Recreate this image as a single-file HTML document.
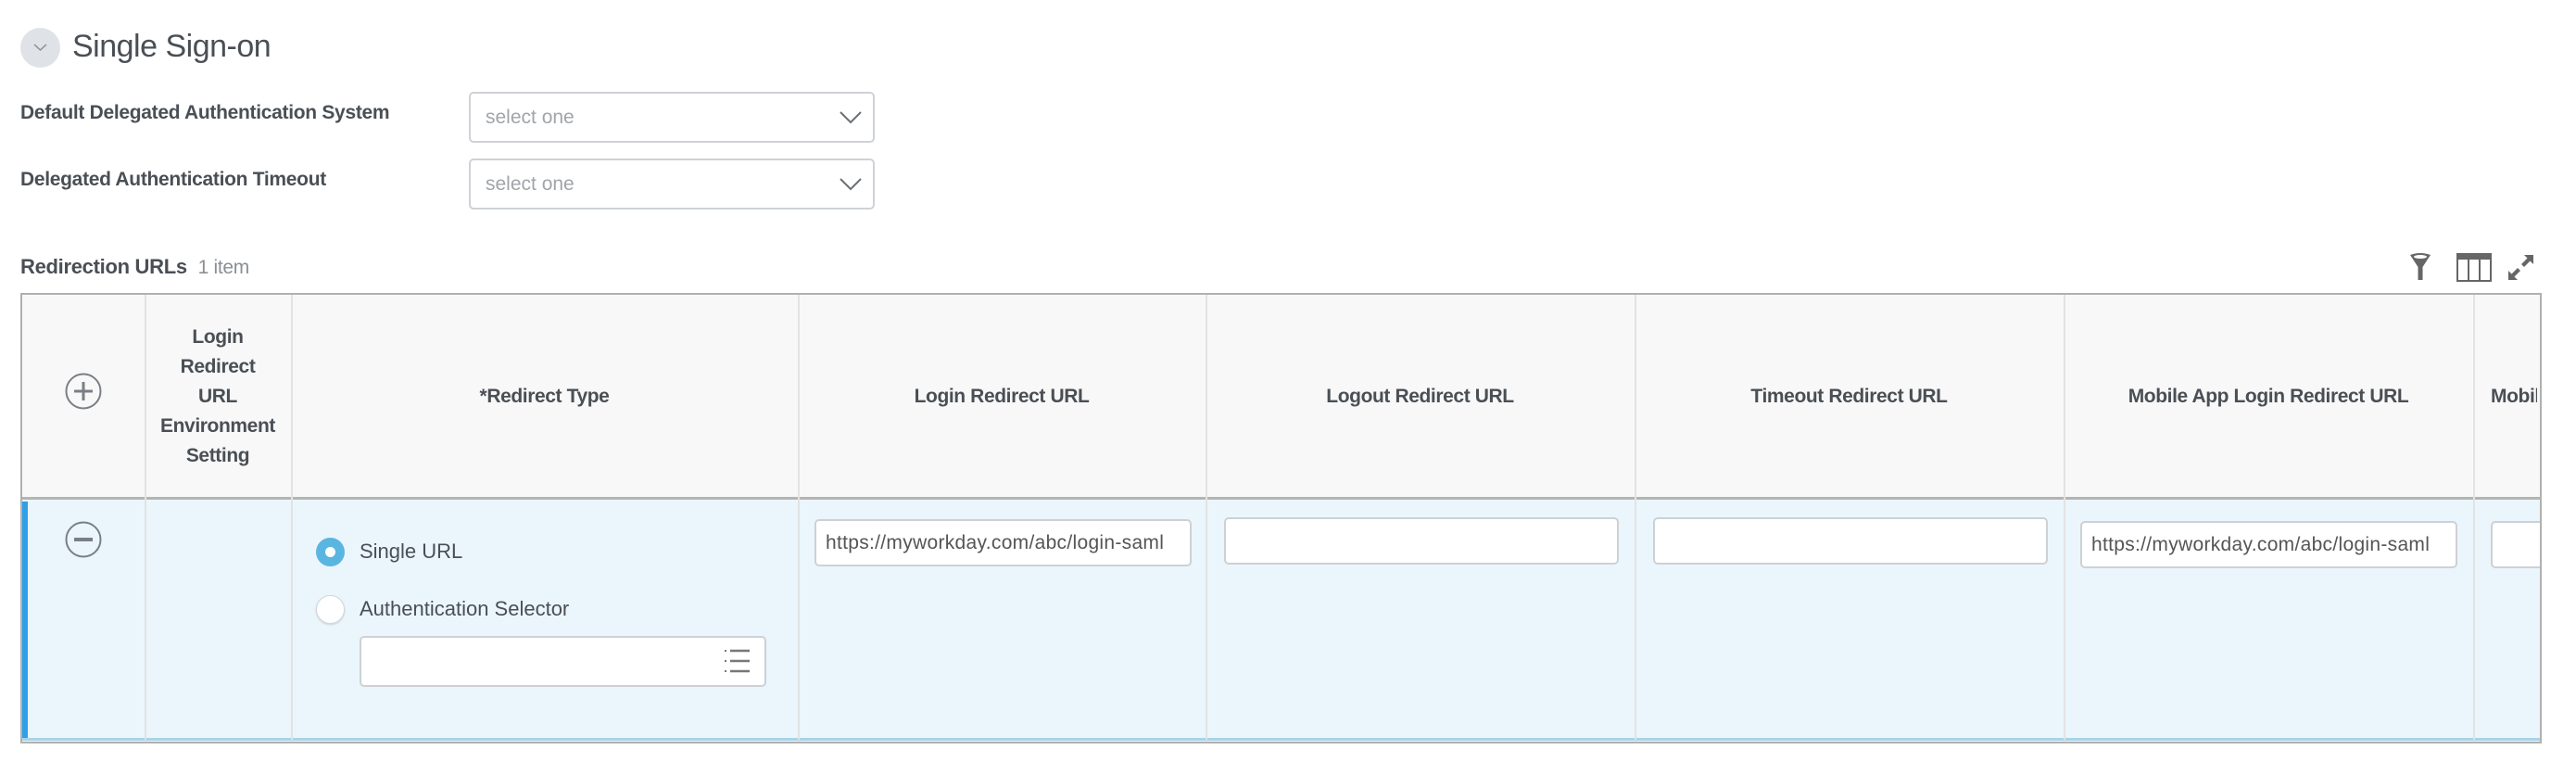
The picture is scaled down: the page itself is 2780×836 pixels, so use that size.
<!DOCTYPE html>
<html><head><meta charset="utf-8"><style>
*{box-sizing:border-box;margin:0;padding:0}
body{width:2780px;height:832px;background:#fff;position:relative;overflow:hidden;font-family:"Liberation Sans",Arial,sans-serif;color:#333}
.a{position:absolute}
.lbl{font-size:21px;font-weight:bold;color:#4a4f55;letter-spacing:-0.3px}
.sel{border:2px solid #ced2d7;border-radius:5px;background:#fff;width:438px;height:55px}
.sel span{position:absolute;left:16px;top:14px;font-size:21px;color:#a0a5aa}
.hd{font-size:21px;color:#4a4f55;text-align:center;font-weight:bold;letter-spacing:-0.4px}
.vl{position:absolute;width:2px;background:#e3e3e3}
.inp{position:absolute;height:51px;border:2px solid #cdd1d6;border-radius:5px;background:#fff;overflow:hidden;white-space:nowrap;font-size:21px;color:#555;padding:12px 0 0 10px}
</style></head><body>
<div class="a" style="left:22px;top:30px;width:43px;height:43px;border-radius:50%;background:#dfe3e7"></div>
<svg class="a" style="left:35px;top:45px" width="17" height="12" viewBox="0 0 17 12"><path d="M2 3 L8.5 9 L15 3" fill="none" stroke="#8a9096" stroke-width="1.5"/></svg>
<div class="a" style="left:78px;top:31px;font-size:34px;color:#4a4f55;letter-spacing:-0.5px">Single Sign-on</div>

<div class="a lbl" style="left:22px;top:110px">Default Delegated Authentication System</div>
<div class="a lbl" style="left:22px;top:182px">Delegated Authentication Timeout</div>
<div class="a sel" style="left:506px;top:99px"><span>select one</span>
<svg class="a" style="left:398px;top:18px" width="24" height="16" viewBox="0 0 24 16"><path d="M1 2 L12 13 L23 2" fill="none" stroke="#6a6f75" stroke-width="2"/></svg></div>
<div class="a sel" style="left:506px;top:171px"><span>select one</span>
<svg class="a" style="left:398px;top:18px" width="24" height="16" viewBox="0 0 24 16"><path d="M1 2 L12 13 L23 2" fill="none" stroke="#6a6f75" stroke-width="2"/></svg></div>

<div class="a" style="left:22px;top:275px;font-size:22px;font-weight:bold;color:#4a4f55;letter-spacing:-0.3px">Redirection URLs <span style="font-weight:normal;color:#8a8f95;font-size:21px;margin-left:6px">1 item</span></div>

<svg class="a" style="left:2600px;top:272px" width="24" height="32" viewBox="0 0 24 32"><path d="M1 3 Q12 -1 23 3 L14.5 16 L14.5 30 L9.5 30 L9.5 16 Z" fill="#666"/><ellipse cx="12" cy="5" rx="7" ry="2" fill="#fff"/></svg>
<svg class="a" style="left:2651px;top:273px" width="38" height="31" viewBox="0 0 38 31"><rect x="1" y="1" width="36" height="29" fill="none" stroke="#666" stroke-width="2"/><rect x="1" y="1" width="36" height="6" fill="#666"/><path d="M13 7V30M25 7V30" stroke="#666" stroke-width="2"/></svg>
<svg class="a" style="left:2705px;top:273px" width="31" height="31" viewBox="0 0 31 31"><path d="M19 2H29V12L25.5 8.5 19 15 16 12 22.5 5.5Z" fill="#666"/><path d="M12 29H2V19L5.5 22.5 12 16 15 19 8.5 25.5Z" fill="#666"/></svg>

<div class="a" style="left:22px;top:316px;width:2721px;height:486px;border:2px solid #b0b0b0;background:#f8f8f8"></div>
<div class="a" style="left:24px;top:539px;width:2717px;height:261px;background:#eaf6fc"></div>
<div class="a" style="left:24px;top:536px;width:2717px;height:3px;background:#b4b4b4"></div>
<div class="a" style="left:24px;top:796px;width:2717px;height:3px;background:#a9d3e6"></div>
<div class="a" style="left:24px;top:541px;width:6px;height:255px;background:#2f9fe8"></div>
<div class="vl" style="left:156px;top:318px;height:480px"></div>
<div class="vl" style="left:314px;top:318px;height:480px"></div>
<div class="vl" style="left:861px;top:318px;height:480px"></div>
<div class="vl" style="left:1301px;top:318px;height:480px"></div>
<div class="vl" style="left:1764px;top:318px;height:480px"></div>
<div class="vl" style="left:2227px;top:318px;height:480px"></div>
<div class="vl" style="left:2669px;top:318px;height:480px"></div>

<svg class="a" style="left:70px;top:402px" width="40" height="40" viewBox="0 0 40 40"><circle cx="20" cy="20" r="18.5" fill="none" stroke="#7a7f85" stroke-width="2"/><path d="M20 10V30M10 20H30" stroke="#7a7f85" stroke-width="3"/></svg>
<svg class="a" style="left:70px;top:562px" width="40" height="40" viewBox="0 0 40 40"><circle cx="20" cy="20" r="18.5" fill="none" stroke="#7a7f85" stroke-width="2"/><path d="M10 20H30" stroke="#7a7f85" stroke-width="4"/></svg>

<div class="a hd" style="left:156px;top:348px;width:158px;line-height:32px">Login<br>Redirect<br>URL<br>Environment<br>Setting</div>
<div class="a hd" style="left:314px;top:416px;width:547px">*Redirect Type</div>
<div class="a hd" style="left:861px;top:416px;width:440px">Login Redirect URL</div>
<div class="a hd" style="left:1301px;top:416px;width:463px">Logout Redirect URL</div>
<div class="a hd" style="left:1764px;top:416px;width:463px">Timeout Redirect URL</div>
<div class="a hd" style="left:2227px;top:416px;width:442px">Mobile App Login Redirect URL</div>
<div class="a hd" style="left:2688px;top:416px;text-align:left;overflow:hidden;width:50px;white-space:nowrap">Mobile</div>

<div class="a" style="left:341px;top:580px;width:31px;height:31px;border-radius:50%;background:#5ab6e0"></div>
<div class="a" style="left:351px;top:590px;width:11px;height:11px;border-radius:50%;background:#fff"></div>
<div class="a" style="left:388px;top:582px;font-size:22px;color:#4a4f55">Single URL</div>
<div class="a" style="left:341px;top:642px;width:31px;height:31px;border-radius:50%;background:#fff;border:1.5px solid #d4d7db;box-shadow:0 1px 2px rgba(0,0,0,.15)"></div>
<div class="a" style="left:388px;top:644px;font-size:22px;color:#4a4f55">Authentication Selector</div>
<div class="inp" style="left:388px;top:686px;width:439px;height:55px"></div>
<svg class="a" style="left:780px;top:699px" width="30" height="28" viewBox="0 0 30 28"><path d="M2 3H4M2 14H4M2 25H4" stroke="#777" stroke-width="2"/><path d="M8 3H29M8 14H29M8 25H29" stroke="#777" stroke-width="2.5"/></svg>

<div class="inp" style="left:879px;top:560px;width:407px"><span style="letter-spacing:0.3px">https://myworkday.com/abc/login-saml</span></div>
<div class="inp" style="left:1321px;top:558px;width:426px"></div>
<div class="inp" style="left:1784px;top:558px;width:426px"></div>
<div class="inp" style="left:2245px;top:562px;width:407px"><span style="letter-spacing:0.3px">https://myworkday.com/abc/login-saml</span></div>
<div class="inp" style="left:2688px;top:562px;width:120px"></div>
<div class="a" style="left:2743px;top:316px;width:37px;height:520px;background:#fff"></div>
<div class="a" style="left:2741px;top:316px;width:2px;height:486px;background:#b0b0b0"></div>
</body></html>
